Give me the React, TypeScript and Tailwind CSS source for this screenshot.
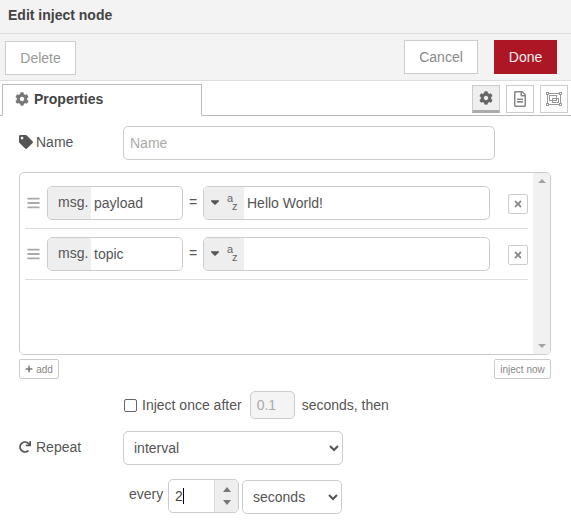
import { FaBars, FaCaretDown, FaCog, FaPlus, FaRedo, FaRegFileAlt, FaTag, FaTimes } from "react-icons/fa";

function AzIcon() {
  return (
    <span className="relative block h-[34px] w-[40px] shrink-0 bg-[#eeeeee] text-[#666]">
      <FaCaretDown className="absolute left-[4px] top-[9px] size-[14px] text-[#555]" />
      <span className="absolute left-[23px] top-[6px] text-[11px] leading-[12px]">a</span>
      <span className="absolute left-[28px] top-[14px] text-[11px] leading-[12px]">z</span>
    </span>
  );
}

function PropertyRow({ name, value }: { name: string; value: string }) {
  return (
    <div className="flex h-[51px] w-[503px] items-start border-b border-[#dddddd] pl-[2px] pt-[8px]">
      <FaBars className="mt-[10px] h-[14px] w-[13px] shrink-0 text-[#aaaaaa]" />
      <div className="ml-[7px] flex h-[34px] w-[136px] shrink-0 overflow-hidden rounded-[5px] border border-[#cccccc]">
        <span className="flex w-[43px] shrink-0 items-center bg-[#eeeeee] pb-[1px] pl-[10px] text-[#555]">msg.</span>
        <span className="flex items-center pl-[3px] text-[#555]">{name}</span>
      </div>
      <span className="mt-[6px] w-[20px] shrink-0 text-center text-[#555]">=</span>
      <div className="flex h-[34px] w-[287px] shrink-0 items-center overflow-hidden rounded-[5px] border border-[#cccccc]">
        <AzIcon />
        <span className="pl-[3px] text-[#555]">{value}</span>
      </div>
      <div className="ml-[18px] mt-[8px] flex size-[20px] shrink-0 items-center justify-center rounded-[2px] border border-[#cccccc]">
        <FaTimes className="size-[10px] text-[#888]" />
      </div>
    </div>
  );
}

export default function App() {
  return (
    <div className="h-[526px] w-[571px] overflow-hidden bg-white font-['Liberation_Sans',sans-serif] text-[14px] text-[#555]">
      {/* Title */}
      <div className="flex h-[34px] items-center border-b border-[#dddddd] bg-[#f3f3f3] pb-[3px] pl-[8px] font-bold text-[#444]">
        Edit inject node
      </div>

      {/* Action buttons */}
      <div className="flex h-[47px] items-start justify-between border-b border-[#dddddd] bg-[#f3f3f3] pl-[5px] pr-[14px] pt-[6px]">
        <button className="mt-[1px] h-[34px] w-[71px] border border-[#cccccc] bg-white text-[#999]">Delete</button>
        <div className="flex gap-[16px]">
          <button className="h-[34px] w-[74px] border border-[#cccccc] bg-white text-[#888]">Cancel</button>
          <button className="h-[34px] w-[63px] bg-[#ad1625] text-[#eeeeee]">Done</button>
        </div>
      </div>

      {/* Tabs */}
      <div className="flex h-[35px] items-end justify-between border-b border-[#bbbbbb] pl-[2px] pr-[3px]">
        <div className="-mb-px flex h-[32px] w-[200px] items-center gap-[5px] border border-[#bbbbbb] border-b-white bg-white pb-[2px] pl-[12px] font-bold text-[#444]">
          <FaCog className="size-[14px] text-[#777]" />
          Properties
        </div>
        <div className="mb-[2px] flex gap-[6px]">
          <div className="flex h-[28px] w-[28px] items-center justify-center border border-b-[3px] border-[#cccccc] border-b-[#aaaaaa] bg-[#efefef]">
            <FaCog className="size-[14px] text-[#666]" />
          </div>
          <div className="flex h-[28px] w-[28px] items-center justify-center border border-[#cccccc]">
            <FaRegFileAlt className="size-[16px] text-[#888]" />
          </div>
          <div className="flex h-[28px] w-[28px] items-center justify-center border border-[#cccccc]">
            <svg viewBox="0 0 16 14" className="h-[14px] w-[16px] text-[#999]" fill="none" stroke="currentColor">
              <rect x="1.5" y="1.5" width="13" height="11" />
              <rect x="3.5" y="3.5" width="7" height="5" />
              <rect x="6.5" y="6.5" width="6" height="4" />
              <rect x="0.5" y="0.5" width="2" height="2" fill="#fff" />
              <rect x="13.5" y="0.5" width="2" height="2" fill="#fff" />
              <rect x="0.5" y="11.5" width="2" height="2" fill="#fff" />
              <rect x="13.5" y="11.5" width="2" height="2" fill="#fff" />
            </svg>
          </div>
        </div>
      </div>

      {/* Form */}
      <div className="pl-[19px] pr-[20px] pt-[10px]">
        <div className="flex h-[34px] items-center">
          <label className="flex w-[104px] items-center gap-[3px] pb-[2px]">
            <FaTag className="size-[14px] text-[#555]" />
            Name
          </label>
          <input
            placeholder="Name"
            className="h-[34px] w-[372px] rounded-[5px] border border-[#cccccc] px-[6px] placeholder:text-[#aaaaaa]"
          />
        </div>

        {/* Property list */}
        <div className="mt-[12px] flex h-[183px] w-[532px] overflow-hidden rounded-[5px] border border-[#cccccc]">
          <div className="flex-1 pl-[5px] pt-[5px]">
            <PropertyRow name="payload" value="Hello World!" />
            <PropertyRow name="topic" value="" />
          </div>
          <div className="flex w-[17px] flex-col items-center justify-between bg-[#f1f1f1] py-[6px]">
            <span className="size-0 border-x-[4px] border-b-[4px] border-x-transparent border-b-[#a3a3a3]" />
            <span className="size-0 border-x-[4px] border-t-[4px] border-x-transparent border-t-[#a3a3a3]" />
          </div>
        </div>

        <div className="mt-[4px] flex w-[532px] justify-between text-[10px] text-[#888]">
          <div className="flex h-[20px] w-[40px] items-center justify-center gap-[3px] rounded-[2px] border border-[#cccccc]">
            <FaPlus className="size-[8px] text-[#777]" />
            add
          </div>
          <div className="flex h-[20px] w-[57px] items-center justify-center rounded-[2px] border border-[#cccccc]">
            inject now
          </div>
        </div>

        {/* Inject once */}
        <div className="mt-[12px] flex h-[28px] items-center pl-[105px]">
          <span className="size-[13px] rounded-[2px] border border-[#666]" />
          <span className="ml-[5px]">Inject once after</span>
          <input
            defaultValue="0.1"
            disabled
            className="ml-[8px] h-[28px] w-[45px] rounded-[5px] border border-[#cccccc] bg-[#f4f4f4] px-[6px] text-[#aaaaaa]"
          />
          <span className="ml-[7px]">seconds, then</span>
        </div>

        {/* Repeat */}
        <div className="mt-[12px] flex h-[34px] items-center">
          <label className="flex w-[104px] items-center gap-[5px] pb-[2px]">
            <FaRedo className="size-[12px] text-[#555]" />
            Repeat
          </label>
          <select className="h-[34px] w-[220px] rounded-[5px] border border-[#cccccc] bg-white pl-[6px]">
            <option>interval</option>
          </select>
        </div>

        <div className="mt-[14px] flex items-start pl-[110px]">
          <span className="w-[39px] pt-[5px]">every</span>
          <div className="flex h-[34px] w-[71px] overflow-hidden rounded-[5px] border border-[#cccccc]">
            <span className="flex flex-1 items-center pl-[6px] text-[#444]">
              2<span className="h-[16px] w-px bg-black" />
            </span>
            <div className="flex w-[24px] flex-col items-center justify-around border-l border-[#dddddd] bg-[#eeeeee] py-[3px]">
              <span className="size-0 border-x-[4px] border-b-[5px] border-x-transparent border-b-[#777]" />
              <span className="size-0 border-x-[4px] border-t-[5px] border-x-transparent border-t-[#777]" />
            </div>
          </div>
          <select className="ml-[3px] mt-[1px] h-[34px] w-[100px] rounded-[5px] border border-[#cccccc] bg-white pl-[6px]">
            <option>seconds</option>
          </select>
        </div>
      </div>
    </div>
  );
}
